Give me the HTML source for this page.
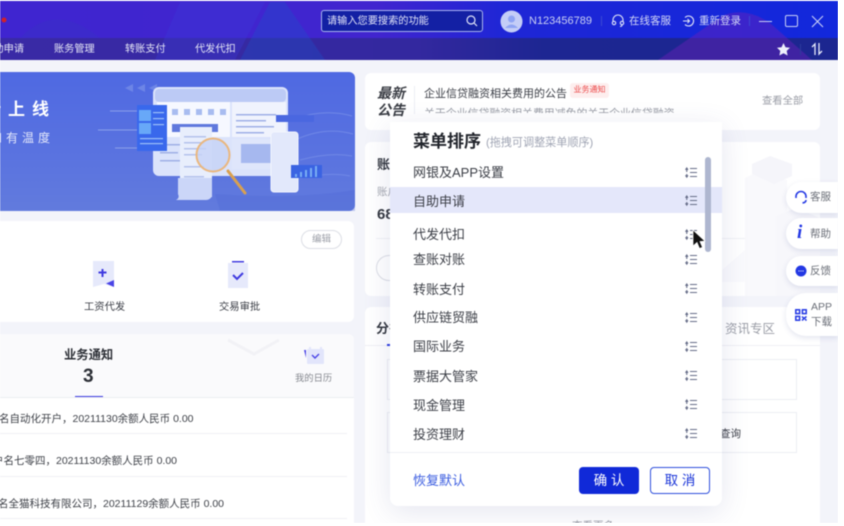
<!DOCTYPE html>
<html><head><meta charset="utf-8">
<style>
*{box-sizing:border-box;margin:0;padding:0}
html,body{width:844px;height:526px;overflow:hidden;background:#fff}
body{position:relative;font-family:"Liberation Sans","Noto Sans CJK SC",sans-serif;color:#33373f}
#w{position:absolute;left:0;top:0;width:844px;height:526px;filter:blur(.5px)}
.a{position:absolute;white-space:nowrap}
.card{position:absolute;background:#fff;border-radius:6px}
.mi{position:absolute;left:23px;font-size:13px;line-height:18px;color:#3c3f47}
.nav{position:absolute;top:42px;font-size:10.200px;line-height:15px;color:#e3e4f4}
.side{position:absolute;left:786px;width:52px;background:#fff;border-radius:16px 0 0 16px;box-shadow:0 2px 6px rgba(60,70,140,.14);font-size:11px;color:#6b6f78}
</style></head><body><div id="w">
<div class="a" style="left:0;top:1px;width:838px;height:522px;background:#f3f4fa"></div>

<!-- header -->
<div class="a" style="left:0;top:1px;width:838px;height:37px;background:linear-gradient(90deg,#3f25d0 0%,#4125cf 45%,#1f26d6 60%,#1228dc 100%)"></div>
<div class="a" style="left:0;top:38px;width:838px;height:22px;background:linear-gradient(90deg,#3a2aa6 0%,#33289f 50%,#1d2692 65%,#1c2690 100%)"></div>
<svg class="a" style="left:0;top:1px" width="838" height="59">
<path d="M20 37Q55 0 100 37Z" fill="#3a2fc8" opacity=".6"/>
<path d="M155 59L180 1H265L235 59Z" fill="#3b3ad8" opacity=".35"/>
<path d="M240 59L270 1H285L325 59Z" fill="#1c50c8" opacity=".35"/>
<path d="M658 59L722 15Q745 5 770 22L812 59Z" fill="#6a22b8" opacity=".45"/>
<circle cx="4" cy="19" r="2.500" fill="#d0202c"/>
</svg>
<div class="a" style="left:321px;top:10px;width:162px;height:22px;background:#1320a4;border:1px solid #a9b4ee;border-radius:3px"></div>
<div class="a" style="left:327px;top:14px;font-size:10.200px;line-height:15px;color:#e0e3f8">请输入您要搜索的功能</div>
<svg class="a" style="left:465px;top:14px" width="14" height="14" fill="none" stroke="#dfe3f8" stroke-width="1.200"><circle cx="6" cy="6" r="4"/><path d="M9 9l3 3"/></svg>
<svg class="a" style="left:500px;top:10px" width="23" height="23"><circle cx="11.500" cy="11.500" r="11" fill="#c4cdf7"/><circle cx="11.500" cy="9" r="3.500" fill="#8fa4f3"/><path d="M5 18q6.500-7 13 0z" fill="#8fa4f3"/></svg>
<div class="a" style="left:529px;top:14px;font-size:11px;line-height:14px;color:#c9cff3">N123456789</div>
<div class="a" style="left:601px;top:16px;width:1px;height:10px;background:#3a48d4"></div>
<svg class="a" style="left:611px;top:14px" width="14" height="14" fill="none" stroke="#dfe3f8" stroke-width="1.100"><path d="M2 8V6a5 5 0 0 1 10 0v2"/><circle cx="3" cy="9" r="1.700"/><circle cx="11" cy="9" r="1.700"/><path d="M11 11q0 1.500-2 1.500"/></svg>
<div class="a" style="left:629px;top:14px;font-size:10.500px;line-height:14px;color:#d5d9f6">在线客服</div>
<svg class="a" style="left:682px;top:14px" width="14" height="14" fill="none" stroke="#dfe3f8" stroke-width="1.100"><path d="M3 3.500a5 5 0 1 1 0 7"/><path d="M1 7h6.500M5.500 5l2 2-2 2"/></svg>
<div class="a" style="left:699px;top:14px;font-size:10.500px;line-height:14px;color:#d5d9f6">重新登录</div>
<div class="a" style="left:749px;top:16px;width:1px;height:10px;background:#3a48d4"></div>
<div class="a" style="left:759px;top:21px;width:13px;height:1px;background:#c9d0f6"></div>
<div class="a" style="left:785px;top:15px;width:13px;height:12px;border:1.200px solid #c9d0f6;border-radius:2px"></div>
<svg class="a" style="left:811px;top:15px" width="13" height="13" stroke="#c9d0f6" stroke-width="1.100"><path d="M1 1l11 11M12 1L1 12"/></svg>

<!-- nav -->
<div class="nav" style="left:-6.500px">助申请</div>
<div class="nav" style="left:54px">账务管理</div>
<div class="nav" style="left:125px">转账支付</div>
<div class="nav" style="left:195px">代发代扣</div>
<svg class="a" style="left:777px;top:43px" width="13" height="13"><path d="M6.500 0l2 4.300 4.500.5-3.300 3.100.9 4.600-4.100-2.300-4.100 2.300.9-4.600L0 4.800l4.500-.5z" fill="#eef0fb"/></svg>
<div class="a" style="left:800px;top:44px;width:1px;height:11px;background:#2c3a9c"></div>
<svg class="a" style="left:810px;top:42px" width="14" height="14" fill="none" stroke="#e6e9fa" stroke-width="1.300"><path d="M5 13V2L2 5M9 1v11l3-3"/></svg>

<!-- banner -->
<div class="a" style="left:0;top:72px;width:355px;height:139px;background:linear-gradient(180deg,#4f69e2 0%,#5a73e0 60%,#627bdd 100%);border-radius:0 6px 6px 0"></div>
<div class="a" style="left:0;top:99px;font-size:17px;line-height:22px;font-weight:700;letter-spacing:7px;color:#fff;text-indent:-16px">新上线</div>
<div class="a" style="left:0;top:129px;font-size:12px;line-height:18px;letter-spacing:4px;color:#e4e8fb;text-indent:-10px">和有温度</div>
<svg class="a" style="left:60px;top:70px" width="295" height="141">
<g fill="#6d85e6"><path d="M65 18l8-4v8zM77 18l8-4v8zM89 18l8-4v8z"/></g>
<g stroke="#8ba0ea" stroke-width="1"><path d="M50 41h30M38 60h50M55 78h30"/></g>
<path d="M232 50q30-12 60-4M235 70q30-14 58-6M240 90q30-8 52-4M240 108q30-6 50-2" stroke="#7088e6" fill="none"/>
<path d="M155 124q90 6 150-6v23H160z" fill="#4d66d4" opacity=".3"/>
<rect x="93" y="17" width="135" height="89" rx="6" fill="#dbe3fb"/>
<rect x="95" y="19" width="131" height="13" rx="4" fill="#bccaf5"/>
<rect x="97" y="32" width="73" height="35" fill="#f6f8ff"/>
<rect x="172" y="32" width="54" height="35" fill="#f0f3fd"/>
<rect x="172" y="69" width="54" height="30" fill="#dfe6fb"/>
<rect x="181" y="74" width="40" height="19" fill="#a6b8ef"/>
<g fill="#a8bcf0"><rect x="112" y="39" width="6" height="6"/><rect x="124" y="39" width="6" height="6"/><rect x="136" y="39" width="6" height="6"/><rect x="148" y="39" width="6" height="6"/><rect x="160" y="39" width="6" height="6"/></g>
<rect x="112" y="54" width="46" height="8" fill="#5f78dd"/>
<g fill="#9fb0e6"><rect x="176" y="44" width="40" height="1.500"/><rect x="176" y="50" width="30" height="1.500"/><rect x="176" y="56" width="38" height="1.500"/><rect x="176" y="62" width="28" height="1.500"/><rect x="100" y="74" width="20" height="1.500"/><rect x="100" y="82" width="18" height="1.500"/><rect x="100" y="90" width="20" height="1.500"/></g>
<rect x="77" y="35" width="30" height="46" fill="#3968ec"/>
<rect x="79" y="40" width="12" height="11" fill="#68a8f8"/><rect x="79" y="53" width="12" height="11" fill="#68a8f8"/>
<g fill="#9cc0f8"><rect x="93" y="42" width="11" height="1.200"/><rect x="93" y="48" width="11" height="1.200"/><rect x="93" y="54" width="11" height="1.200"/><rect x="80" y="68" width="23" height="1.200"/><rect x="80" y="73" width="23" height="1.200"/></g>
<rect x="120" y="57" width="32" height="70" fill="#e8eefc"/>
<g fill="#b4c2ec"><rect x="124" y="66" width="22" height="1.500"/><rect x="124" y="72" width="20" height="1.500"/><rect x="124" y="78" width="22" height="1.500"/><rect x="124" y="84" width="18" height="1.500"/><rect x="124" y="96" width="20" height="1.500"/><rect x="124" y="106" width="20" height="1.500"/></g>
<path d="M118 108h34v18q-2 4-6 4h-30q4-2 2-6z" fill="#cbd6f8"/>
<path d="M168 101l17 22" stroke="#d9a050" stroke-width="3" stroke-linecap="round"/>
<circle cx="153" cy="85" r="16.500" fill="#c5d2f6" fill-opacity=".8" stroke="#eab77e" stroke-width="2"/>
<rect x="211" y="62" width="27" height="60" rx="3" fill="#e2e8fb" stroke="#f2f5fe"/>
<rect x="216" y="45" width="38" height="7" fill="#4a67e0"/>
<rect x="231" y="95" width="31" height="13" fill="#3a63e2"/>
<g fill="#79aef3"><rect x="235" y="104" width="2" height="3"/><rect x="240" y="102" width="2" height="5"/><rect x="245" y="100" width="2" height="7"/><rect x="250" y="98" width="2" height="9"/><rect x="255" y="96" width="2" height="11"/></g>
</svg>

<!-- notice -->
<div class="card" style="left:365px;top:73px;width:455px;height:57px"></div>
<div class="a" style="left:377px;top:85px;font-size:14px;line-height:17px;font-weight:700;font-style:italic;color:#3a3d44">最新<br>公告</div>
<div class="a" style="left:414px;top:86px;width:1px;height:28px;background:#eceef4"></div>
<div class="a" style="left:424px;top:86px;font-size:11px;line-height:16px;color:#3b3e46">企业信贷融资相关费用的公告</div>
<div class="a" style="left:570px;top:83px;width:39px;height:15px;background:#fdeeee;border-radius:3px;font-size:8px;line-height:14px;text-align:center;color:#ec4a4a">业务通知</div>
<div class="a" style="left:424px;top:107px;height:6px;overflow:hidden;font-size:10.900px;line-height:15px;color:#9a9da6">关于企业信贷融资相关费用减免的关于企业信贷融资</div>
<div class="a" style="left:762px;top:95px;font-size:10.300px;line-height:14px;color:#9a9da6">查看全部</div>

<!-- account card -->
<div class="card" style="left:365px;top:142px;width:455px;height:154px"></div>
<div class="a" style="left:376px;top:238px;width:400px;height:1px;background:#f0f1f5"></div>
<svg class="a" style="left:720px;top:150px" width="100" height="146">
<path d="M25 28l12-6 30 8v120H25z" fill="#f9f9fc"/><path d="M32 14l18-8 22 8v12l-18 8-22-10z" fill="#f5f5fa"/><path d="M56 66l20-8 24 10v78H56z" fill="#f7f7fb"/><path d="M0 122l25-22v32H0z" fill="#fafafd"/></svg>
<div class="a" style="left:377px;top:156px;font-size:13px;line-height:18px;font-weight:700;color:#33373f">账户</div>
<div class="a" style="left:377px;top:185px;font-size:10.500px;line-height:14px;color:#a5a8b0">账户</div>
<div class="a" style="left:377px;top:206px;font-size:15px;line-height:18px;font-weight:700;color:#33373f">68</div>
<div class="a" style="left:376px;top:255px;width:60px;height:26px;border:1px solid #dcdee5;border-radius:13px"></div>

<!-- section -->
<div class="card" style="left:365px;top:307px;width:455px;height:216px;border-radius:6px 6px 0 0"></div>
<div class="a" style="left:376px;top:320px;font-size:13px;line-height:18px;font-weight:700;color:#33373f">分行</div>
<div class="a" style="left:365px;top:345px;width:455px;height:1px;background:#eff0f5"></div>
<div class="a" style="left:387px;top:344px;width:10px;height:2px;background:#2b3be0"></div>
<div class="a" style="left:725px;top:320px;font-size:12.500px;line-height:18px;color:#9a9da6">资讯专区</div>
<div class="a" style="left:387px;top:359px;width:410px;height:41px;border:1px solid #eceef3"></div>
<div class="a" style="left:387px;top:412px;width:410px;height:41px;border:1px solid #eceef3"></div>
<div class="a" style="left:720px;top:427px;font-size:10.500px;line-height:15px;color:#3b3e46">查询</div>
<div class="a" style="left:572px;top:519px;font-size:10.500px;line-height:14px;color:#9a9da6;height:4px;overflow:hidden">查看更多</div>

<!-- shortcuts -->
<div class="card" style="left:0;top:221px;width:354px;height:101px;border-radius:0 6px 6px 0"></div>
<div class="a" style="left:301px;top:230px;width:41px;height:19px;border:1px solid #dcdee5;border-radius:10px;font-size:9.500px;line-height:17px;text-align:center;color:#9a9da6">编辑</div>
<svg class="a" style="left:92px;top:260px" width="24" height="30"><path d="M1 1h21v26l-10-3-11 3z" fill="#e6e9fb"/><path d="M22 20v7l-8-3.500z" fill="#4a44e6"/><path d="M10.500 9v8M6.500 12.500h8" stroke="#3f3ae0" stroke-width="2"/></svg>
<svg class="a" style="left:227px;top:260px" width="24" height="30"><rect x="1" y="3" width="20" height="25" fill="#e6e9fb"/><rect x="5" y="1" width="12" height="1.500" fill="#3f3ae0"/><path d="M6 15l4 4 6-6" fill="none" stroke="#3f3ae0" stroke-width="2"/></svg>
<div class="a" style="left:84px;top:301px;font-size:10.300px;line-height:14px;color:#3b3e46">工资代发</div>
<div class="a" style="left:219px;top:301px;font-size:10.300px;line-height:14px;color:#3b3e46">交易审批</div>

<!-- notices -->
<div class="card" style="left:0;top:334px;width:354px;height:189px;border-radius:0 6px 0 0"></div>
<div class="a" style="left:0;top:334px;width:354px;height:63px;background:#fafafc;border-radius:0 6px 0 0"></div>
<svg class="a" style="left:225px;top:336px" width="60" height="24" fill="none" stroke="#f2f2f6" stroke-width="3"><path d="M3 4l26 14 25-14"/></svg>
<div class="a" style="left:64px;top:347px;font-size:12.300px;line-height:16px;font-weight:700;color:#2c2f36">业务通知</div>
<div class="a" style="left:83px;top:365px;font-size:19px;line-height:23px;font-weight:700;color:#2c2f36">3</div>
<div class="a" style="left:75px;top:396px;width:28px;height:2px;background:#3b3ae0"></div>
<div class="a" style="left:0;top:397px;width:354px;height:1px;background:#ecedf2"></div>
<svg class="a" style="left:303px;top:346px" width="22" height="20"><path d="M7 3V1M18 3V1" stroke="#e2e5fb" stroke-width="2"/><rect x="4" y="3" width="17" height="15" rx="1" fill="#e2e5fb"/><path d="M1 4h2v8z" fill="#4a44e6"/><path d="M9 9l3 3 4-4" fill="none" stroke="#4a44e6" stroke-width="1.400"/></svg>
<div class="a" style="left:295px;top:371px;font-size:9.300px;line-height:14px;color:#85888f">我的日历</div>
<div class="a" style="left:-1px;top:412px;font-size:10.500px;line-height:15px;color:#3f4249">名自动化开户，20211130余额人民币 0.00</div>
<div class="a" style="left:0;top:433px;width:347px;height:1px;background:#eff0f4"></div>
<div class="a" style="left:-7px;top:454px;font-size:10.500px;line-height:15px;color:#3f4249">户名七零四，20211130余额人民币 0.00</div>
<div class="a" style="left:0;top:476px;width:347px;height:1px;background:#eff0f4"></div>
<div class="a" style="left:-2px;top:497px;font-size:10.500px;line-height:15px;color:#3f4249">名全猫科技有限公司，20211129余额人民币 0.00</div>
<div class="a" style="left:0;top:518px;width:347px;height:1px;background:#eff0f4"></div>

<!-- modal -->
<div class="a" style="left:390px;top:122px;width:332px;height:384px;background:#fff;border-radius:0 0 8px 8px;box-shadow:0 6px 28px rgba(70,80,150,.14)">
<div class="a" style="left:23px;top:9px;font-size:17px;line-height:22px;font-weight:700;color:#22252c">菜单排序</div>
<div class="a" style="left:96px;top:13px;font-size:11.100px;line-height:16px;color:#a0a5b4">(拖拽可调整菜单顺序)</div>
<div class="a" style="left:0;top:65px;width:332px;height:26px;background:#e4e7fa"></div>
<div class="mi" style="top:42px">网银及APP设置</div>
<div class="mi" style="top:71px">自助申请</div>
<div class="mi" style="top:104px">代发代扣</div>
<div class="mi" style="top:129px">查账对账</div>
<div class="mi" style="top:158.500px">转账支付</div>
<div class="mi" style="top:187px">供应链贸融</div>
<div class="mi" style="top:216px">国际业务</div>
<div class="mi" style="top:245.500px">票据大管家</div>
<div class="mi" style="top:275px">现金管理</div>
<div class="mi" style="top:304px">投资理财</div>
<svg class="a" style="left:0;top:2px" width="332" height="330" fill="none" stroke="#666d88" stroke-width="1.100">
<defs><g id="s"><path d="M.5 2.800l1.250-1.800 1.250 1.800M1.750 2v3M1.750 7v3M.5 8.300l1.250 1.800 1.250-1.800M5 1.500h7M5 5.500h7M5 9.500h7" transform="translate(295 0)"/></g></defs>
<use href="#s" y="43"/><use href="#s" y="71"/><use href="#s" y="105"/><use href="#s" y="130"/><use href="#s" y="159"/><use href="#s" y="188"/><use href="#s" y="217"/><use href="#s" y="246"/><use href="#s" y="275"/><use href="#s" y="304"/>
</svg>
<div class="a" style="left:315px;top:35px;width:6px;height:95px;background:#aeb6cf;border-radius:3px"></div>
<div class="a" style="left:0;top:330px;width:332px;height:1px;background:#eef0f5"></div>
<div class="a" style="left:23px;top:350px;font-size:13px;line-height:18px;color:#3a5ce0">恢复默认</div>
<div class="a" style="left:189px;top:345px;width:60px;height:27px;background:#1029d8;border-radius:4px;font-size:13.500px;line-height:27px;text-align:center;color:#fff">确 认</div>
<div class="a" style="left:260px;top:345px;width:60px;height:27px;background:#fff;border:1px solid #2f50dc;border-radius:4px;font-size:13.500px;line-height:25px;text-align:center;color:#1a35d8">取 消</div>
</div>

<!-- cursor -->
<svg class="a" style="left:692px;top:230px" width="15" height="21"><path d="M1 0v16l4-3.500 2.500 6 3-1.200-2.500-5.800 5-.4z" fill="#111" stroke="#fff" stroke-width=".7"/></svg>

<!-- side -->
<div class="side" style="top:182px;height:31px"><svg class="a" style="left:8px;top:8px" width="14" height="15" fill="none" stroke="#2338e4" stroke-width="1.600"><path d="M2 8V6.500a5 5 0 0 1 10 0V8"/><path d="M12 10q0 2.500-3.500 3"/></svg><span class="a" style="left:24px;top:8px;line-height:14px;font-size:10.500px">客服</span></div>
<div class="side" style="top:218px;height:31px"><span class="a" style="left:11px;top:5px;font:italic 700 19px/20px 'Liberation Serif',serif;color:#2338e4">i</span><span class="a" style="left:24px;top:9px;line-height:14px;font-size:10.500px">帮助</span></div>
<div class="side" style="top:256px;height:30px"><svg class="a" style="left:9px;top:9px" width="12" height="12"><circle cx="6" cy="6" r="5.500" fill="#2338e4"/><path d="M3.500 6h1M5.500 6h1M7.500 6h1" stroke="#fff"/></svg><span class="a" style="left:24px;top:8px;line-height:14px;font-size:10.500px">反馈</span></div>
<div class="side" style="top:293px;height:43px;border-radius:20px 0 0 20px"><svg class="a" style="left:9px;top:16px" width="12" height="12" fill="none" stroke="#2338e4" stroke-width="1.500"><rect x=".8" y=".8" width="3.800" height="3.800"/><rect x="7.400" y=".8" width="3.800" height="3.800"/><rect x=".8" y="7.400" width="3.800" height="3.800"/><path d="M7 7.500l2 2 2.500-2M7 11.500l1.500-1.500M10 10l1.500 1.500"/></svg><span class="a" style="left:25px;top:7px;line-height:15px;font-size:10.500px;white-space:normal;width:24px">APP 下载</span></div>
</div>
<div class="a" style="left:838px;top:0;width:6px;height:526px;background:#fff"></div>
<div class="a" style="left:0;top:523px;width:844px;height:3px;background:#fff"></div>
</body></html>
